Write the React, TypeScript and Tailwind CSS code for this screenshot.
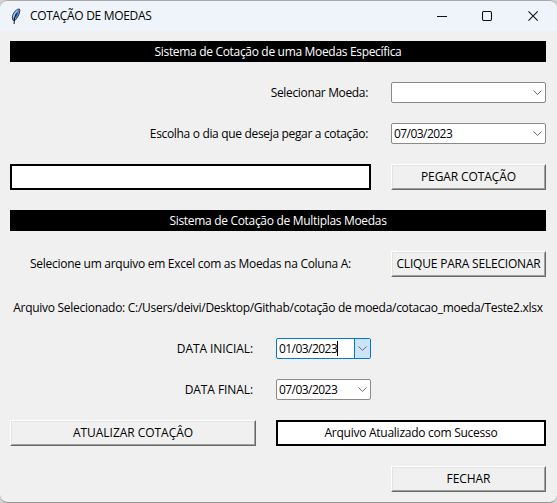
import type { ReactNode } from 'react';

function Label({ children, className = '' }: { children: ReactNode; className?: string }) {
  return <div className={`flex h-[21px] items-center whitespace-nowrap ${className}`}>{children}</div>;
}

function Banner({ children, className = '' }: { children: ReactNode; className?: string }) {
  return (
    <h2 className={`col-span-3 flex h-[21px] items-center justify-center bg-black text-white ${className}`}>
      {children}
    </h2>
  );
}

function Button({ children, className = '' }: { children: ReactNode; className?: string }) {
  return (
    <button
      type="button"
      className={`h-[26px] whitespace-nowrap border border-t-white border-r-[#696969] border-b-[#696969] border-l-white ${className}`}
    >
      <span className="flex h-full items-center justify-center border border-t-[#e3e3e3] border-r-[#a0a0a0] border-b-[#a0a0a0] border-l-[#e3e3e3]">
        {children}
      </span>
    </button>
  );
}

function Combo({ value = '', active = false }: { value?: string; active?: boolean }) {
  return (
    <div
      className={`flex h-[21px] rounded-[2px] border bg-white ${active ? 'border-[#0078d4]' : 'border-[#8a8a8a]'}`}
    >
      <div className="flex flex-1 items-center pl-[2px] tracking-[-0.55px]">
        {value}
        {active && <span className="h-[15px] w-px bg-black" />}
      </div>
      <div
        className={`flex w-4 items-center justify-center border-l ${
          active ? 'border-[#0078d4] bg-[#cce4f7]' : 'border-transparent'
        }`}
      >
        <svg width="9" height="5" viewBox="0 0 9 5" fill="none" stroke="#6b6b6b" strokeWidth="1">
          <path d="M0.5 0.5 4.5 4.4 8.5 0.5" />
        </svg>
      </div>
    </div>
  );
}

function Feather() {
  return (
    <svg width="10" height="17" viewBox="0 0 10 17">
      <path
        d="M2 12.4 1.3 9.4 2.1 6.2 4 3.3 6.4 1.4 8.5 1 8.9 2.8 8 6.4 6.2 9.8 3.8 12.6Z"
        fill="#5d9be6"
        stroke="#27313f"
        strokeWidth="0.9"
      />
      <path d="M7.9 2.2 7 6.2 4.8 10 4.3 7.6Z" fill="#2f66b4" />
      <path d="M6.2 2.4 3.4 5.8 2.5 9.6" stroke="#b9d6f7" strokeWidth="0.9" fill="none" />
      <path d="M5.6 5.4 3.5 10 3.1 16" stroke="#10151c" strokeWidth="1" fill="none" />
    </svg>
  );
}

export default function App() {
  return (
    <div className="h-[503px] w-[557px] overflow-hidden bg-[#d2d2d2] font-['Open_Sans','Noto_Sans',sans-serif] text-[12px] leading-none text-black">
      <div className="h-[503px] w-[557px] overflow-hidden rounded-[8px] border-t border-b border-t-[#a9a9a9] border-b-[#949494] bg-[#f0f0f0]">
        <header className="flex h-[30px] items-center bg-[#eff4fa] pl-[11px]">
          <Feather />
          <h1 className="ml-[9px] flex-1 tracking-[-0.32px]">COTAÇÃO DE MOEDAS</h1>
          <div className="flex items-center pr-[17px]">
            <svg width="104" height="12" viewBox="0 0 104 12" fill="none" stroke="#111" strokeWidth="1.1">
              <path d="M1 6.5h10" />
              <rect x="46.5" y="1.5" width="9" height="9" rx="1.2" />
              <path d="M92.5 1.3 101.7 10.7M101.7 1.3 92.5 10.7" />
            </svg>
          </div>
        </header>
        <main className="grid grid-cols-[246px_95px_155px] gap-5 pt-[10px] pl-[10px]">
          <Banner className="tracking-[-0.32px]">Sistema de Cotação de uma Moedas Específica</Banner>

          <Label className="col-span-2 justify-end pr-[3px] tracking-[-0.34px]">Selecionar Moeda:</Label>
          <Combo />

          <Label className="col-span-2 justify-end pr-[3px] tracking-[-0.33px]">
            Escolha o dia que deseja pegar a cotação:
          </Label>
          <Combo value="07/03/2023" />

          <div className="col-span-2 h-[26px] border-2 border-black bg-white" />
          <Button className="tracking-[-0.1px]">PEGAR COTAÇÃO</Button>

          <Banner className="tracking-[-0.31px]">Sistema de Cotação de Multiplas Moedas</Banner>

          <Label className="col-span-2 h-[26px] justify-center tracking-[-0.28px]">
            Selecione um arquivo em Excel com as Moedas na Coluna A:
          </Label>
          <Button className="tracking-[-0.2px]">CLIQUE PARA SELECIONAR</Button>

          <Label className="col-span-3 justify-center tracking-[-0.285px]">
            Arquivo Selecionado: C:/Users/deivi/Desktop/Githab/cotação de moeda/cotacao_moeda/Teste2.xlsx
          </Label>

          <Label className="justify-end pr-[3px] tracking-[-0.08px]">DATA INICIAL:</Label>
          <Combo value="01/03/2023" active />
          <div />

          <Label className="justify-end pr-[3px] tracking-[-0.08px]">DATA FINAL:</Label>
          <Combo value="07/03/2023" />
          <div />

          <Button className="tracking-[-0.04px]">ATUALIZAR COTAÇÂO</Button>
          <div className="col-span-2 flex h-[26px] items-center justify-center border-2 border-black bg-white tracking-[-0.26px]">
            Arquivo Atualizado com Sucesso
          </div>

          <Button className="col-start-3 tracking-[-0.05px]">FECHAR</Button>
        </main>
      </div>
    </div>
  );
}
